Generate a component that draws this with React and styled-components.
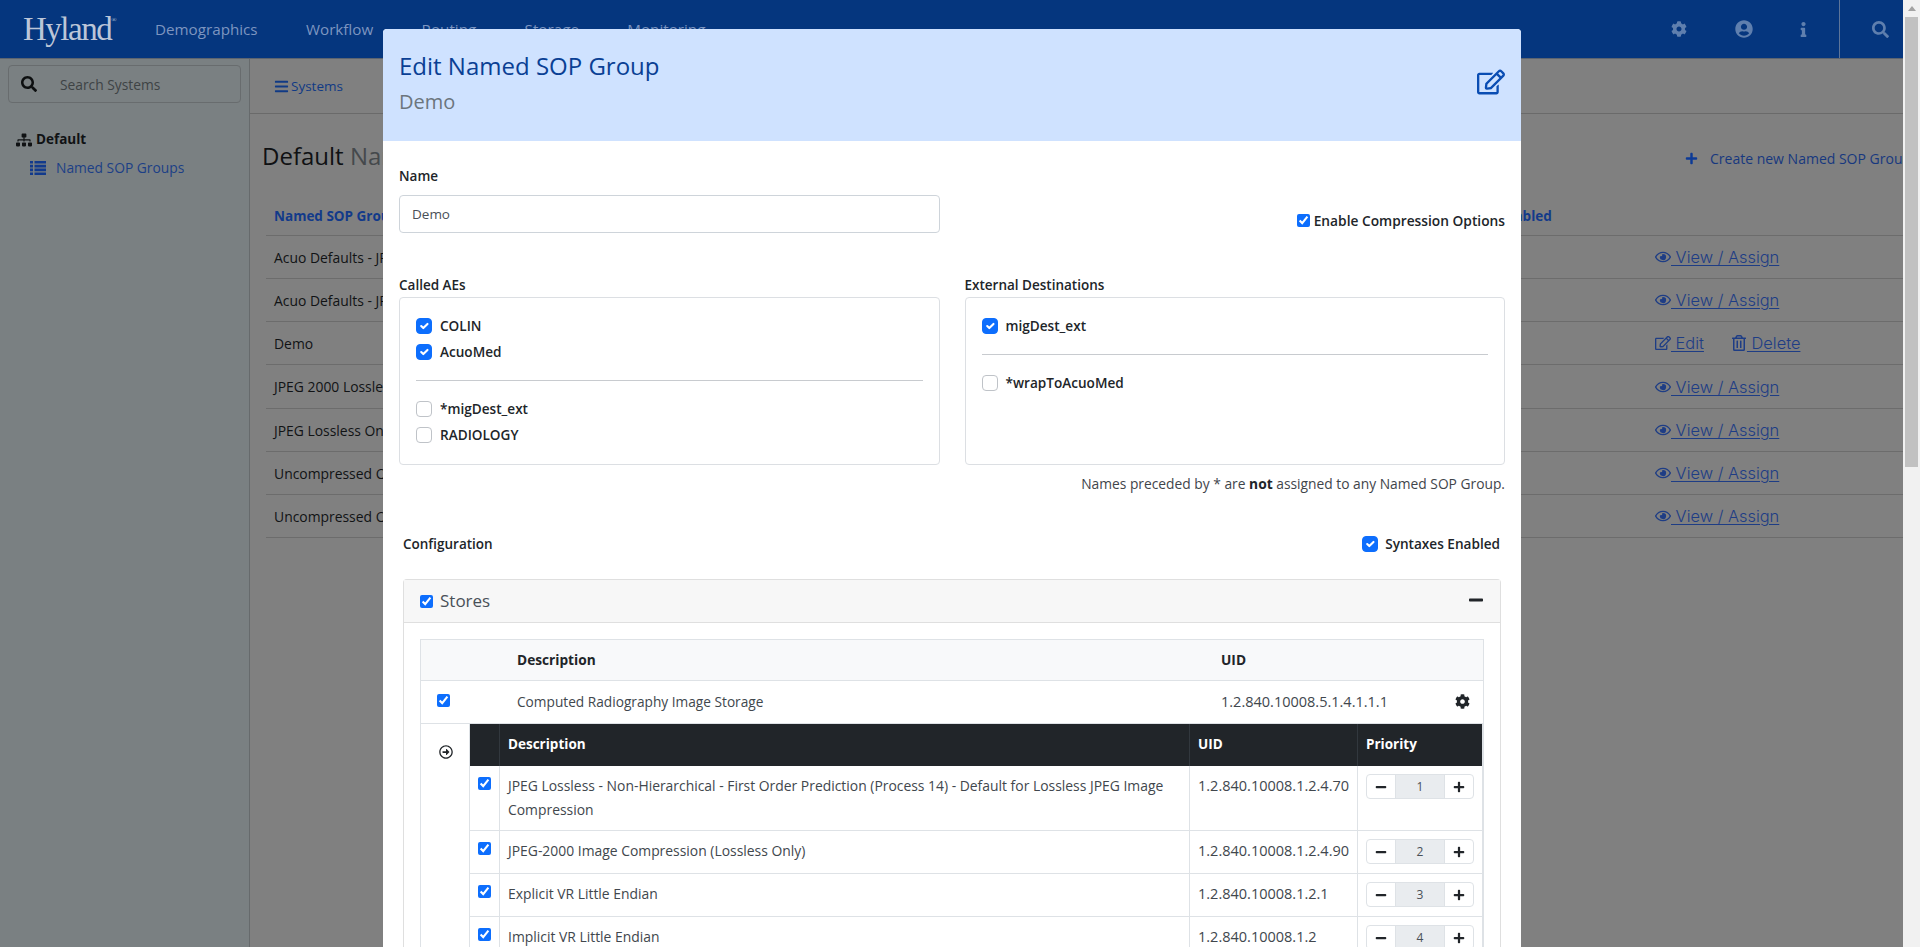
import React from 'react';
import styled, { createGlobalStyle } from 'styled-components';
import {
  FaCog, FaUserCircle, FaInfo, FaSearch, FaSitemap, FaBars, FaPlus, FaMinus,
  FaRegEye, FaRegEdit, FaRegTrashAlt, FaRegArrowAltCircleRight,
} from 'react-icons/fa';

const GlobalStyle = createGlobalStyle`
  html, body { margin: 0; padding: 0; height: 947px; overflow: hidden; background: #808080; }
  body { font-family: "Open Sans", "Liberation Sans", sans-serif; font-size: 14px; color: #212529; }
  * { box-sizing: border-box; }
`;

const Page = styled.div`
  position: relative;
  width: 1920px;
  height: 947px;
  overflow: hidden;
`;

const Shell = styled.div`
  width: 1903px;
  height: 947px;
  display: flex;
  flex-direction: column;
  background: #808080;
`;

const Navbar = styled.header`
  height: 59px;
  flex: none;
  display: flex;
  align-items: center;
  background: #05367e;
  border-bottom: 1px solid #5c6470;
`;

const Logo = styled.div`
  width: 155px;
  padding-left: 23px;
  font-family: "Liberation Serif", serif;
  font-size: 33px;
  letter-spacing: -1.5px;
  color: #bcc6d8;
  line-height: 56px;
  sup { font-size: 7px; letter-spacing: 0; vertical-align: 18px; line-height: 0; }
`;

const NavItems = styled.nav`
  display: flex;
  gap: 48.4px;
`;

const NavItem = styled.span`
  font-size: 15.2px;
  color: #7d95c0;
`;

const NavIcons = styled.div`
  margin-left: auto;
  display: flex;
  align-items: center;
  height: 58px;
`;

const NavIcon = styled.span`
  display: flex;
  justify-content: center;
  width: ${p => p.$w}px;
  color: #5f7fae;
  font-size: ${p => p.$size}px;
`;

const NavSearch = styled.div`
  width: 64px;
  height: 58px;
  margin-left: 9px;
  padding-left: 18px;
  display: flex;
  align-items: center;
  justify-content: center;
  color: #5f7fae;
  font-size: 17px;
  border-left: 1px solid #5d7599;
`;

const Content = styled.div`
  flex: 1;
  display: flex;
  min-height: 0;
`;

const Sidebar = styled.aside`
  width: 250px;
  flex: none;
  background: #7a8082;
  border-right: 1px solid #666a6c;
  padding: 6px 8px 0;
`;

const SearchBox = styled.div`
  width: 233px;
  height: 38px;
  display: flex;
  align-items: center;
  gap: 23px;
  padding-left: 12px;
  border: 1px solid #686c6e;
  border-radius: 4px;
  color: #3e4345;
  font-size: 13.8px;
  svg { color: #0d0f10; font-size: 16px; }
`;

const TreeRoot = styled.div`
  margin: 26px 0 0 8px;
  display: flex;
  align-items: center;
  gap: 4px;
  font-weight: 700;
  font-size: 13.5px;
  color: #101214;
  line-height: 21px;
  svg { font-size: 16px; }
`;

const TreeLeaf = styled.div`
  margin: 7px 0 0 22px;
  display: flex;
  align-items: center;
  gap: 10px;
  font-size: 13.8px;
  color: #1c3f86;
  line-height: 21px;
  svg { color: #123a8c; }
`;

const Main = styled.main`
  flex: 1;
  min-width: 0;
  overflow: hidden;
`;

const Toolbar = styled.div`
  height: 55px;
  display: flex;
  align-items: center;
  gap: 2px;
  padding-left: 24px;
  border-bottom: 1px solid #6a6a6a;
  font-size: 13.5px;
  color: #103a85;
  svg { font-size: 15px; }
`;

const TitleRow = styled.div`
  display: flex;
  align-items: center;
  height: 60px;
  margin-top: 11px;
  padding-left: 12px;
`;

const PageTitle = styled.h3`
  margin: 0;
  font-size: 24px;
  font-weight: 400;
  color: #0f1113;
  span { color: #45494c; }
`;

const CreateLink = styled.div`
  margin: 6px 0 0 auto;
  width: 218px;
  flex: none;
  display: flex;
  align-items: center;
  gap: 12px;
  white-space: nowrap;
  overflow: hidden;
  color: #17387f;
  font-size: 14px;
  svg { flex: none; font-size: 13px; color: #0c3a96; }
`;

const ListTable = styled.div`
  margin: 11px 0 0 16px;
`;

const ListRow = styled.div`
  display: grid;
  grid-template-columns: 1fr 220px 257px;
  align-items: center;
  height: ${p => (p.$tall ? 44 : 43)}px;
  border-bottom: 1px solid #6c6c6c;
  color: #111315;
  font-size: 13.9px;
  & > div { padding-left: 8px; white-space: nowrap; }
`;

const ListHead = styled(ListRow)`
  height: 40px;
  font-size: 13.5px;
  font-weight: 700;
  color: #123a8a;
`;

const RowLinks = styled.div`
  display: flex;
  gap: 26px;
`;

const RowLink = styled.span`
  margin-left: 1px;
  font-family: Inter, "Open Sans", sans-serif;
  font-size: 16.4px;
  font-weight: 300;
  color: #1e3d85;
  text-decoration: underline;
  text-underline-offset: 2px;
  svg { font-size: 16px; vertical-align: -2px; }
`;

const Scrollbar = styled.div`
  position: absolute;
  top: 0;
  right: 0;
  width: 17px;
  height: 947px;
  background: #f1f1f1;
  &::before {
    content: "";
    position: absolute;
    top: 6px;
    left: 5px;
    border: 4px solid transparent;
    border-top: 0;
    border-bottom: 5px solid #a3a3a3;
  }
`;

const ScrollThumb = styled.div`
  position: absolute;
  top: 17px;
  left: 2px;
  width: 13px;
  height: 450px;
  background: #c1c1c1;
`;

const Modal = styled.section`
  position: absolute;
  top: 29px;
  left: 383px;
  width: 1138px;
  height: 918px;
  overflow: hidden;
  background: #fff;
  border-radius: 4px 4px 0 0;
`;

const ModalHeader = styled.div`
  height: 112px;
  padding: 22px 16px 0;
  display: flex;
  justify-content: space-between;
  background: #cfe2ff;
`;

const ModalTitle = styled.h4`
  margin: 0;
  font-size: 24px;
  font-weight: 400;
  line-height: 30px;
  color: #0a3f94;
`;

const ModalSubtitle = styled.div`
  margin-top: 9px;
  font-size: 20px;
  line-height: 24px;
  color: #6c757d;
`;

const HeaderIcon = styled.div`
  margin-top: 17px;
  font-size: 28px;
  line-height: 0;
  color: #0a4db3;
`;

const ModalBody = styled.div`
  padding: 25px 16px 0;
`;

const NameRow = styled.div`
  display: flex;
  justify-content: space-between;
`;

const FieldLabel = styled.div`
  font-size: 13.5px;
  font-weight: 600;
  line-height: 21px;
  color: #212529;
`;

const NameField = styled.div`
  width: 541px;
`;

const TextInput = styled.div`
  height: 38px;
  margin-top: 8px;
  padding-left: 12px;
  display: flex;
  align-items: center;
  border: 1px solid #ced4da;
  border-radius: 4px;
  font-size: 13.5px;
  color: #495057;
`;

const NativeCheck = styled.input.attrs({ type: 'checkbox' })`
  margin: 0;
  width: 13px;
  height: 13px;
  flex: none;
  accent-color: #0d6efd;
`;

const InlineCheck = styled.label`
  display: flex;
  align-items: center;
  gap: 4px;
  font-size: 13.75px;
  font-weight: 600;
  color: #212529;
`;

const EnableCheck = styled(InlineCheck)`
  align-self: flex-end;
  margin-bottom: 3px;
`;

const Columns = styled.div`
  display: grid;
  grid-template-columns: 540.5px 540.5px;
  gap: 25px;
  margin-top: 42px;
`;

const ListBox = styled.div`
  height: 168px;
  margin-top: 1px;
  padding: 15px 16px 0;
  border: 1px solid #dcdfe3;
  border-radius: 4px;
`;

const SwitchCheck = styled.input.attrs({ type: 'checkbox' })`
  appearance: none;
  margin: 0;
  width: 16px;
  height: 16px;
  flex: none;
  border: 1px solid #bfc3c8;
  border-radius: 4px;
  background: #fff;
  &:checked {
    border-color: #0d6efd;
    background: #0d6efd url("data:image/svg+xml,%3csvg xmlns='http://www.w3.org/2000/svg' viewBox='0 0 20 20'%3e%3cpath fill='none' stroke='%23fff' stroke-linecap='round' stroke-linejoin='round' stroke-width='3' d='M6 10l3 3l6-6'/%3e%3c/svg%3e") center / 100% no-repeat;
  }
`;

const CheckRow = styled.label`
  height: 26px;
  display: flex;
  align-items: center;
  gap: 8px;
  font-size: 13.6px;
  font-weight: 600;
  color: #212529;
  span { margin-bottom: 1px; }
`;

const Divider = styled.hr`
  margin: 15px 0;
  height: 1px;
  border: 0;
  background: #c8cbcf;
`;

const Note = styled.div`
  margin-top: 8px;
  text-align: right;
  line-height: 21px;
  font-size: 13.8px;
  color: #3f454b;
  b { font-weight: 700; color: #212529; }
`;

const ConfigRow = styled.div`
  height: 22px;
  margin: 39px 4px 24px;
  padding-right: 1px;
  display: flex;
  align-items: center;
  justify-content: space-between;
`;

const SyntaxCheck = styled(CheckRow)`
  gap: 7px;
`;

const Card = styled.div`
  margin: 0 4px;
  border: 1px solid #dfdfdf;
  border-bottom: 0;
  border-radius: 4px 4px 0 0;
`;

const CardHeader = styled.div`
  height: 43px;
  display: flex;
  align-items: center;
  gap: 7px;
  padding: 0 16px;
  background: #f7f7f7;
  border-bottom: 1px solid #dfdfdf;
  font-size: 17px;
  color: #495057;
  svg { margin-left: auto; margin-bottom: 3px; font-size: 16px; color: #212529; }
`;

const CardTitle = styled.span`
  margin-bottom: 2px;
`;

const CardBody = styled.div`
  padding: 16px 16px 0;
`;

const StoreTable = styled.div`
  border: 1px solid #dee2e6;
  border-bottom: 0;
`;

const StoreRow = styled.div`
  display: grid;
  grid-template-columns: 96px 704px 1fr 28px;
  align-items: center;
  height: ${p => p.$h}px;
  padding-bottom: 2px;
  border-bottom: 1px solid #dee2e6;
  background: ${p => (p.$head ? '#f8f9fa' : '#fff')};
  font-weight: ${p => (p.$head ? 700 : 400)};
  font-size: 13.7px;
  color: ${p => (p.$head ? '#212529' : '#41474d')};
`;

const StoreCheckCell = styled.div`
  display: flex;
  padding: 0 0 2px 16px;
`;

const GearCell = styled.div`
  font-size: 15px;
  line-height: 0;
  color: #212529;
`;

const UidText = styled.span`
  font-size: 14.5px;
`;

const SubRow = styled.div`
  display: flex;
`;

const SubIcon = styled.div`
  width: 48px;
  flex: none;
  padding-top: 21px;
  display: flex;
  justify-content: center;
  font-size: 14px;
  color: #212529;
  svg { margin-left: 1px; }
`;

const SyntaxTable = styled.div`
  width: 1014px;
  flex: none;
  border-left: 1px solid #dee2e6;
  border-right: 1px solid #dee2e6;
`;

const SyntaxGrid = styled.div`
  display: grid;
  grid-template-columns: 29px 690px 168px 1fr;
  border-bottom: 1px solid #dee2e6;
`;

const SyntaxHead = styled(SyntaxGrid)`
  height: 42px;
  padding-bottom: 0;
  background: #212529;
  border-bottom: 0;
  font-weight: 700;
  font-size: 13.5px;
  color: #fff;
`;

const HeadCell = styled.div`
  display: flex;
  align-items: center;
  padding: 0 0 2px 8px;
  & + & { border-left: 1px solid #32383e; }
`;

const SyntaxCell = styled.div`
  padding: 8px;
  line-height: 24px;
  font-size: 13.9px;
  color: #41474d;
  & + & { border-left: 1px solid #dee2e6; }
`;

const SyntaxCheckCell = styled(SyntaxCell)`
  padding: 11px 0 0 8px;
  line-height: 0;
`;

const PriorityCell = styled(SyntaxCell)`
  padding-bottom: 9px;
`;

const Stepper = styled.div`
  display: grid;
  grid-template-columns: 28px 1fr 28px;
  height: 25px;
  border: 1px solid #dee2e6;
  border-radius: 4px;
  overflow: hidden;
`;

const StepButton = styled.div`
  display: flex;
  align-items: center;
  justify-content: center;
  font-size: 12px;
  color: #212529;
`;

const StepValue = styled.div`
  display: flex;
  align-items: center;
  justify-content: center;
  background: #e9ecef;
  border-left: 1px solid #dee2e6;
  border-right: 1px solid #dee2e6;
  font-size: 12px;
  color: #495057;
`;

const ListIcon = () => (
  <svg width="16" height="14" viewBox="0 0 16 14" fill="currentColor">
    <path d="M0 0h3v2.6H0zM4.5 0H16v2.6H4.5zM0 3.8h3v2.6H0zM4.5 3.8H16v2.6H4.5zM0 7.6h3v2.6H0zM4.5 7.6H16v2.6H4.5zM0 11.4h3V14H0zM4.5 11.4H16V14H4.5z" />
  </svg>
);

const groups = [
  { name: 'Acuo Defaults - JPEG Lossless', links: 'view' },
  { name: 'Acuo Defaults - JPEG 2000', links: 'view' },
  { name: 'Demo', links: 'edit' },
  { name: 'JPEG 2000 Lossless', links: 'view', tall: true },
  { name: 'JPEG Lossless Only', links: 'view' },
  { name: 'Uncompressed Only', links: 'view' },
  { name: 'Uncompressed Only', links: 'view' },
];

const syntaxes = [
  {
    text: 'JPEG Lossless - Non-Hierarchical - First Order Prediction (Process 14) - Default for Lossless JPEG Image Compression',
    uid: '1.2.840.10008.1.2.4.70',
  },
  { text: 'JPEG-2000 Image Compression (Lossless Only)', uid: '1.2.840.10008.1.2.4.90' },
  { text: 'Explicit VR Little Endian', uid: '1.2.840.10008.1.2.1' },
  { text: 'Implicit VR Little Endian', uid: '1.2.840.10008.1.2' },
];

export default function App() {
  return (
    <Page>
      <GlobalStyle />
      <Shell>
        <Navbar>
          <Logo>Hyland<sup>®</sup></Logo>
          <NavItems>
            {['Demographics', 'Workflow', 'Routing', 'Storage', 'Monitoring'].map(item => (
              <NavItem key={item}>{item}</NavItem>
            ))}
          </NavItems>
          <NavIcons>
            <NavIcon $w={66} $size={16}><FaCog /></NavIcon>
            <NavIcon $w={64} $size={18}><FaUserCircle /></NavIcon>
            <NavIcon $w={54} $size={15}><FaInfo /></NavIcon>
            <NavSearch><FaSearch /></NavSearch>
          </NavIcons>
        </Navbar>
        <Content>
          <Sidebar>
            <SearchBox><FaSearch /> Search Systems</SearchBox>
            <TreeRoot><FaSitemap /> Default</TreeRoot>
            <TreeLeaf><ListIcon /> Named SOP Groups</TreeLeaf>
          </Sidebar>
          <Main>
            <Toolbar><FaBars /> Systems</Toolbar>
            <TitleRow>
              <PageTitle>Default <span>Named SOP Groups</span></PageTitle>
              <CreateLink><FaPlus /> Create new Named SOP Group</CreateLink>
            </TitleRow>
            <ListTable>
              <ListHead>
                <div>Named SOP Group</div>
                <div>Syntaxes Enabled</div>
                <div />
              </ListHead>
              {groups.map((g, i) => (
                <ListRow key={i} $tall={g.tall}>
                  <div>{g.name}</div>
                  <div />
                  <RowLinks>
                    {g.links === 'view' ? (
                      <RowLink><FaRegEye /> View / Assign</RowLink>
                    ) : (
                      <>
                        <RowLink><FaRegEdit /> Edit</RowLink>
                        <RowLink><FaRegTrashAlt /> Delete</RowLink>
                      </>
                    )}
                  </RowLinks>
                </ListRow>
              ))}
            </ListTable>
          </Main>
        </Content>
      </Shell>

      <Scrollbar><ScrollThumb /></Scrollbar>

      <Modal>
        <ModalHeader>
          <div>
            <ModalTitle>Edit Named SOP Group</ModalTitle>
            <ModalSubtitle>Demo</ModalSubtitle>
          </div>
          <HeaderIcon><FaRegEdit /></HeaderIcon>
        </ModalHeader>
        <ModalBody>
          <NameRow>
            <NameField>
              <FieldLabel>Name</FieldLabel>
              <TextInput>Demo</TextInput>
            </NameField>
            <EnableCheck><NativeCheck defaultChecked /> Enable Compression Options</EnableCheck>
          </NameRow>

          <Columns>
            <div>
              <FieldLabel>Called AEs</FieldLabel>
              <ListBox>
                <CheckRow><SwitchCheck defaultChecked /> <span>COLIN</span></CheckRow>
                <CheckRow><SwitchCheck defaultChecked /> <span>AcuoMed</span></CheckRow>
                <Divider />
                <CheckRow><SwitchCheck /> <span>*migDest_ext</span></CheckRow>
                <CheckRow><SwitchCheck /> <span>RADIOLOGY</span></CheckRow>
              </ListBox>
            </div>
            <div>
              <FieldLabel>External Destinations</FieldLabel>
              <ListBox>
                <CheckRow><SwitchCheck defaultChecked /> <span>migDest_ext</span></CheckRow>
                <Divider />
                <CheckRow><SwitchCheck /> <span>*wrapToAcuoMed</span></CheckRow>
              </ListBox>
            </div>
          </Columns>
          <Note>Names preceded by * are <b>not</b> assigned to any Named SOP Group.</Note>

          <ConfigRow>
            <FieldLabel>Configuration</FieldLabel>
            <SyntaxCheck><SwitchCheck defaultChecked /> <span>Syntaxes Enabled</span></SyntaxCheck>
          </ConfigRow>

          <Card>
            <CardHeader><NativeCheck defaultChecked /> <CardTitle>Stores</CardTitle> <FaMinus /></CardHeader>
            <CardBody>
              <StoreTable>
                <StoreRow $h={41} $head>
                  <div />
                  <div>Description</div>
                  <div>UID</div>
                  <div />
                </StoreRow>
                <StoreRow $h={43}>
                  <StoreCheckCell><NativeCheck defaultChecked /></StoreCheckCell>
                  <div>Computed Radiography Image Storage</div>
                  <UidText>1.2.840.10008.5.1.4.1.1.1</UidText>
                  <GearCell><FaCog /></GearCell>
                </StoreRow>
                <SubRow>
                  <SubIcon><FaRegArrowAltCircleRight /></SubIcon>
                  <SyntaxTable>
                    <SyntaxHead>
                      <HeadCell />
                      <HeadCell>Description</HeadCell>
                      <HeadCell>UID</HeadCell>
                      <HeadCell>Priority</HeadCell>
                    </SyntaxHead>
                    {syntaxes.map((s, i) => (
                      <SyntaxGrid key={s.uid}>
                        <SyntaxCheckCell><NativeCheck defaultChecked /></SyntaxCheckCell>
                        <SyntaxCell>{s.text}</SyntaxCell>
                        <SyntaxCell><UidText>{s.uid}</UidText></SyntaxCell>
                        <PriorityCell>
                          <Stepper>
                            <StepButton><FaMinus /></StepButton>
                            <StepValue>{i + 1}</StepValue>
                            <StepButton><FaPlus /></StepButton>
                          </Stepper>
                        </PriorityCell>
                      </SyntaxGrid>
                    ))}
                  </SyntaxTable>
                </SubRow>
              </StoreTable>
            </CardBody>
          </Card>
        </ModalBody>
      </Modal>
    </Page>
  );
}
